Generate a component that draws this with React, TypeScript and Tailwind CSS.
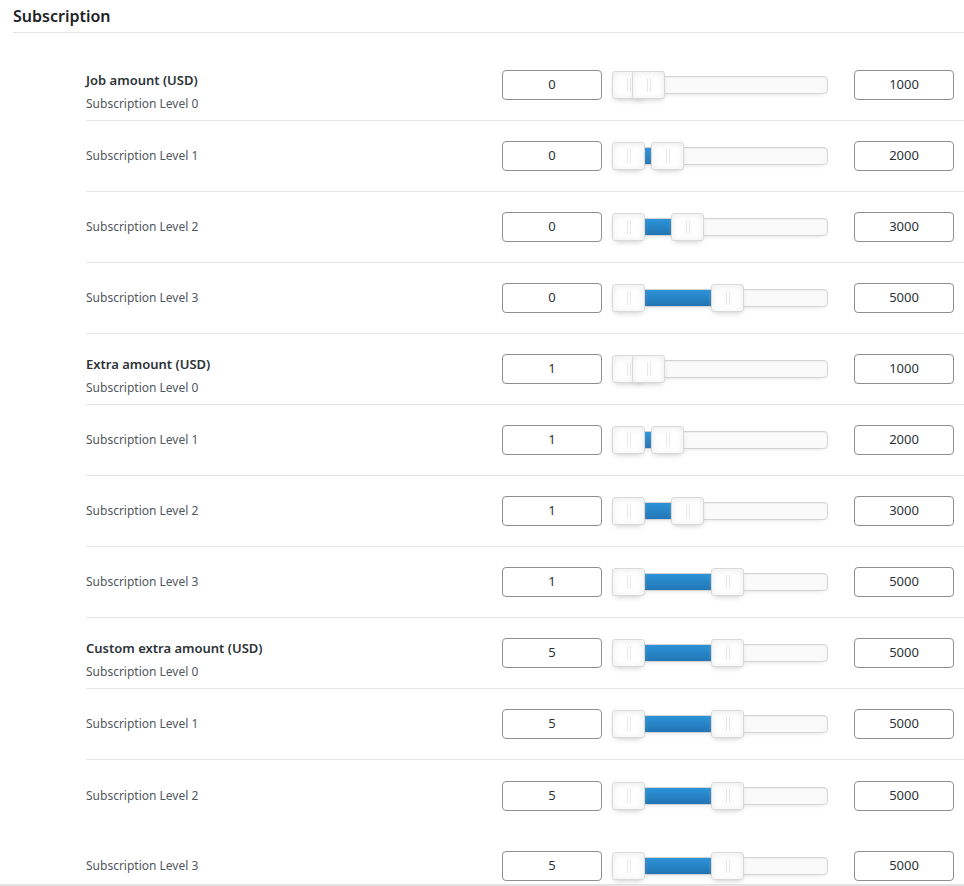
import React from "react";

type Row = { title?: string; level: number; min: number; max: number; border: boolean };

const groups = [
  { title: "Job amount (USD)", min: 0, maxes: [1000, 2000, 3000, 5000] },
  { title: "Extra amount (USD)", min: 1, maxes: [1000, 2000, 3000, 5000] },
  { title: "Custom extra amount (USD)", min: 5, maxes: [5000, 5000, 5000, 5000] },
];

const rows: Row[] = groups.flatMap((g, gi) =>
  g.maxes.map((max, i) => ({
    title: i === 0 ? g.title : undefined,
    level: i,
    min: g.min,
    max,
    border: !(gi === 2 && i >= 2),
  }))
);

// px per unit along the track (handle offset from track's left edge)
const SCALE = 0.01972;
const HANDLE_W = 33;

function Handle({ left, top }: { left: number; top?: boolean }) {
  return (
    <div
      className={`absolute top-[-6px] h-[28px] w-[33px] rounded-[3px] border border-[#d9d9d9] bg-white shadow-[inset_0_0_1px_#fff,inset_0_1px_7px_#ebebeb,0_3px_6px_-3px_#bbb] ${top ? "z-20" : "z-10"}`}
      style={{ left: left - 1 }}
    >
      <span className="absolute left-[14px] top-[6px] h-[14px] w-px bg-[#e8e8e8]" />
      <span className="absolute left-[17px] top-[6px] h-[14px] w-px bg-[#e8e8e8]" />
    </div>
  );
}

function RangeSlider({ min, max }: { min: number; max: number }) {
  const a = Math.round(min * SCALE);
  const b = Math.round(max * SCALE);
  return (
    <div className="relative h-[18px] w-[216px] rounded-[4px] border border-[#d3d3d3] bg-[#fafafa] shadow-[inset_0_1px_1px_#f0f0f0,0_3px_6px_-5px_#bbb]">
      <div
        className="absolute inset-y-0 bg-gradient-to-b from-[#2c93d8] to-[#2275b4]"
        style={{ left: a + HANDLE_W / 2 - 1, width: b - a }}
      />
      <Handle left={a} />
      <Handle left={b} top />
    </div>
  );
}

function NumBox({ value }: { value: number }) {
  return (
    <div className="flex h-[30px] w-[100px] items-center justify-center rounded-[4px] border border-[#8c8f94] bg-white text-[13px] text-[#2c3338]">
      {value}
    </div>
  );
}

export default function App() {
  return (
    <div className="min-h-[886px] bg-white font-['Noto_Sans','Open_Sans',sans-serif] text-[#1d2327]">
      <div className="pl-[13px]">
        <h2 className="flex h-[33px] items-center border-b border-[#e4e4e4] pb-[1px] text-[16px] font-semibold text-[#1d2327]">
          Subscription
        </h2>
      </div>
      <div className="mt-[17px] pl-[86px]">
        {rows.map((r, i) => (
          <div
            key={i}
            className={`flex items-center ${i === rows.length - 1 ? "h-[70px]" : "h-[71px]"} ${r.border ? "border-b border-[#e5e5e5]" : ""}`}
          >
            <div className="w-[416px] self-stretch">
              {r.title ? (
                <div className="pt-[20px]">
                  <div className="h-[20px] text-[13px] font-semibold leading-[20px] text-[#2c3338]">{r.title}</div>
                  <div className="mt-[4px] h-[20px] text-[12px] leading-[20px] text-[#50575e]">
                    Subscription Level {r.level}
                  </div>
                </div>
              ) : (
                <div className="flex h-full items-center text-[12px] text-[#50575e]">Subscription Level {r.level}</div>
              )}
            </div>
            <NumBox value={r.min} />
            <div className="ml-[10px]">
              <RangeSlider min={r.min} max={r.max} />
            </div>
            <div className="ml-[26px]">
              <NumBox value={r.max} />
            </div>
          </div>
        ))}
      </div>
      <div className="fixed inset-x-0 bottom-0 h-[2px] bg-[#e2e2e2]" />
    </div>
  );
}
